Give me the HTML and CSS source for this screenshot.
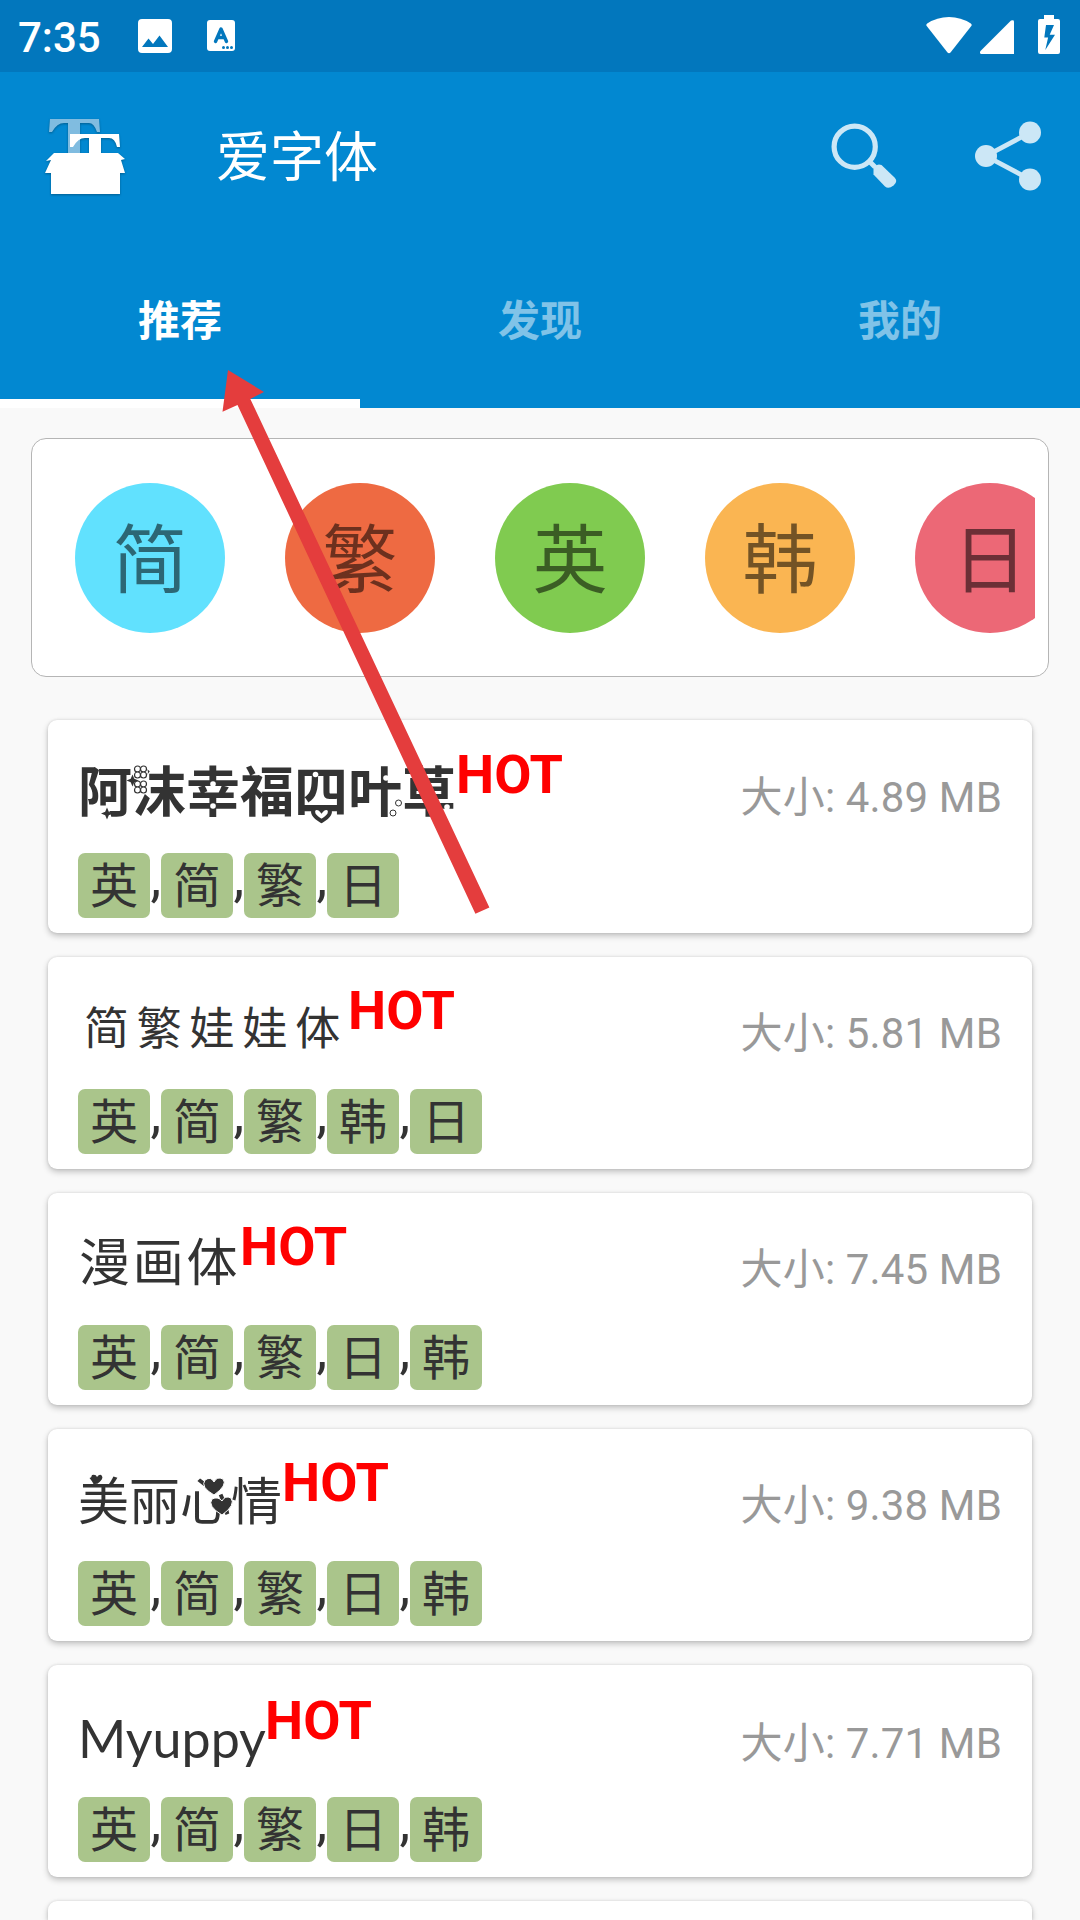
FILE: index.html
```html
<!DOCTYPE html>
<html lang="zh-CN">
<head>
    <title>爱字体</title>
    <meta charset="utf-8">
    <link rel="stylesheet" href="styles.css">
</head>
<body>

<div class="status-bar">
    <span class="time">7:35</span>
    <svg class="icon-picture" width="34" height="34" viewBox="0 0 34 34">
        <path fill="#fff" fill-rule="evenodd" d="M4 0h26a4 4 0 0 1 4 4v26a4 4 0 0 1-4 4H4a4 4 0 0 1-4-4V4a4 4 0 0 1 4-4zM4 28h26l-8.500-11.500-6.500 8.500-4.500-5.500z"/>
    </svg>
    <svg class="icon-input" width="28" height="31" viewBox="0 0 28 31">
        <rect width="28" height="31" rx="3" fill="#fff"/>
        <path d="M8.500 21.500L14 9l5.500 12.500M10.500 17.500h7" fill="none" stroke="#0277bd" stroke-width="3.400" stroke-linecap="round" stroke-linejoin="round"/>
        <g fill="#0277bd"><circle cx="16.500" cy="27.500" r="1.500"/><circle cx="20.500" cy="27.500" r="1.500"/><circle cx="24.500" cy="27.500" r="1.500"/></g>
    </svg>
    <div class="system-icons">
        <svg class="icon-wifi" width="46" height="37" viewBox="0 0 46 37">
            <path fill="#fff" d="M.7 9Q-.3 7.500 1.200 6.500 11 0 23 0t21.800 6.500q1.500 1 .5 2.500L24.500 35.500q-1.500 1.500-3 0z"/>
        </svg>
        <svg class="icon-signal" width="34" height="34" viewBox="0 0 34 34">
            <path fill="#fff" d="M34 1.500V34H1.500Q0 34 0 32.500v-1L31 .5Q34-.5 34 1.500z"/>
        </svg>
        <svg class="icon-battery" width="22" height="39" viewBox="0 0 22 39">
            <path fill="#fff" fill-rule="evenodd" d="M6 0h10v4h4q2 0 2 2v31q0 2-2 2H2q-2 0-2-2V6q0-2 2-2h4zM8 10L6.300 22.500h3.800L7.300 35 17 19.700h-5.300L16 10z"/>
        </svg>
    </div>
</div>

<div class="header">
    <div class="toolbar">
        <svg class="logo" width="84" height="80" viewBox="0 0 84 80">
            <path fill="#80bce0" d="M6 2h49l1 13h-3q-3-9-8-9h-9v30H24V6h-4Q13 6 8 15H5z"/>
            <path fill="#fff" d="M26 17h49l1 13h-3q-2-9-8-9h-8v15H45V21h-4q-7 0-12 9h-3z"/>
            <path fill="#fff" d="M10 36h64l7 6-4 1 4 13h-5v21H7V56H1l6-13-5 1z"/>
        </svg>
        <span class="app-name">爱字体</span>
        <svg class="icon-search" width="68" height="68" viewBox="0 0 68 68">
            <circle cx="24.700" cy="24.700" r="20.600" fill="none" stroke="#cce7f6" stroke-width="5.200"/>
            <path d="M39 39l6 6" stroke="#cce7f6" stroke-width="5"/>
            <path fill="#cce7f6" d="M43.500 45.500q3-4 8-2.500L64.500 55.500q4 4-1 8t-8.500 1L43.500 52.500z"/>
        </svg>
        <svg class="icon-share" width="68" height="70" viewBox="0 0 68 70">
            <path d="M57 11.500L13 35l44 23.500" fill="none" stroke="#cce7f6" stroke-width="4.800"/>
            <g fill="#cce7f6"><circle cx="13" cy="35" r="11"/><circle cx="57" cy="11.500" r="11"/><circle cx="57" cy="58.500" r="11"/></g>
        </svg>
    </div>
    <div class="tabs">
        <div class="tab active">推荐</div>
        <div class="tab">发现</div>
        <div class="tab">我的</div>
    </div>
</div>

<div class="languages">
    <div class="languages-scroll">
        <div class="lang lang-jian">简</div>
        <div class="lang lang-fan">繁</div>
        <div class="lang lang-ying">英</div>
        <div class="lang lang-han">韩</div>
        <div class="lang lang-ri">日</div>
    </div>
</div>

<div class="font-list">
    <div class="card first-card">
        <div class="card-top">
            <div class="title"><span class="name font-clover">阿沫幸福四叶草<svg class="decor" width="378" height="60" viewBox="0 0 378 60">
                <g id="clover" stroke="#333" stroke-width="1.200">
                    <circle cx="62.500" cy="5" r="7.500" fill="#fff" stroke="none"/>
                    <g fill="#fff"><circle cx="59.500" cy="2" r="3"/><circle cx="65.500" cy="2" r="3"/><circle cx="59.500" cy="8" r="3"/><circle cx="65.500" cy="8" r="3"/></g>
                </g>
                <use href="#clover" y="15"/>
                <g fill="#fff" stroke="#333" stroke-width="1"><circle cx="320.500" cy="36" r="3"/><circle cx="315" cy="46" r="3"/></g>
                <path fill="#333" d="M54.500 7.500l1.800 4.200 4.200 1.800-4.200 1.800-1.800 4.200-1.800-4.200-4.200-1.800 4.200-1.800zM29 40.500l1.800 4.200 4.200 1.800-4.200 1.800-1.800 4.200-1.800-4.200-4.200-1.800 4.200-1.800z"/>
                <path fill="#fff" stroke="#333" stroke-width="4" d="M243.500 54q-12-7-7-12.500 4-2 7 2 3-4 7-2 5 5.500-7 12.500z"/>
                <g fill="#fff"><circle cx="135" cy="17" r="2.800"/><circle cx="135" cy="39" r="2.800"/><circle cx="237.500" cy="7.500" r="2.800"/><circle cx="308" cy="11" r="2.800"/><circle cx="278.500" cy="43" r="2.800"/><circle cx="369" cy="40" r="2.800"/></g>
            </svg></span><span class="hot">HOT</span></div>
            <div class="size">大小: 4.89 MB</div>
        </div>
        <div class="tags"><span>英</span>,<span>简</span>,<span>繁</span>,<span>日</span></div>
    </div>
    <div class="card">
        <div class="card-top">
            <div class="title"><span class="name font-wawa">简繁娃娃体</span><span class="hot">HOT</span></div>
            <div class="size">大小: 5.81 MB</div>
        </div>
        <div class="tags"><span>英</span>,<span>简</span>,<span>繁</span>,<span>韩</span>,<span>日</span></div>
    </div>
    <div class="card">
        <div class="card-top">
            <div class="title"><span class="name font-manhua">漫画体</span><span class="hot">HOT</span></div>
            <div class="size">大小: 7.45 MB</div>
        </div>
        <div class="tags"><span>英</span>,<span>简</span>,<span>繁</span>,<span>日</span>,<span>韩</span></div>
    </div>
    <div class="card">
        <div class="card-top">
            <div class="title"><span class="name font-heart">美丽心情<svg class="decor" width="204" height="60" viewBox="0 0 204 60">
                <g fill="#333" stroke="#fff" stroke-width="1">
                    <path d="M136 19q-14-8-9-15 6-4 9 2 3-6 9-3 5 6-9 16z"/>
                    <path d="M144 39q-15-9-10-16 6-3 10 2 3-6 9-3 5 7-9 17z"/>
                </g>
                <path fill="#333" d="M19 8q-8-5-5-9 4-1 5 2 3-4 5-1 2 3-5 8z"/>
            </svg></span><span class="hot">HOT</span></div>
            <div class="size">大小: 9.38 MB</div>
        </div>
        <div class="tags"><span>英</span>,<span>简</span>,<span>繁</span>,<span>日</span>,<span>韩</span></div>
    </div>
    <div class="card">
        <div class="card-top">
            <div class="title"><span class="name font-myuppy">Myuppy</span><span class="hot">HOT</span></div>
            <div class="size">大小: 7.71 MB</div>
        </div>
        <div class="tags"><span>英</span>,<span>简</span>,<span>繁</span>,<span>日</span>,<span>韩</span></div>
    </div>
    <div class="card last-card"></div>
</div>

<svg class="arrow" width="1080" height="1920" viewBox="0 0 1080 1920">
    <path fill="#e43d3d" d="M228 370l36 22-13.700 7L489.400 907.500l-14 6.200L237.500 405l-15 6.700z"/>
</svg>

</body>
</html>
```
FILE: styles.css
```css
body,html {
    margin: 0; padding: 0;
}
body {
    position: relative;
    width: 1080px;
    height: 1920px;
    overflow: hidden;
    background: #f9f9f9;
    color: #333;
    font-family: Roboto, 'Noto Sans CJK SC', sans-serif;
}
svg {
    display: block;
    flex: none;
}

/* status bar */
.status-bar {
    display: flex;
    box-sizing: border-box;
    height: 72px;
    padding: 0 20px 0 18px;
    background: #0277bd;
    color: #fff;
}
.time {
    width: 120px;
    font-size: 42px;
    font-weight: 500;
    line-height: 76px;
}
.icon-picture {
    margin-top: 19px;
}
.icon-input {
    margin: 20px 0 0 35px;
}
.system-icons {
    display: flex;
    margin-left: auto;
}
.icon-wifi {
    margin-top: 17px;
}
.icon-signal {
    margin: 20px 24px 0 8px;
}
.icon-battery {
    margin-top: 15px;
}

/* header */
.header {
    height: 336px;
    background: #0288d1;
    color: #fff;
}
.toolbar {
    display: flex;
    align-items: center;
    box-sizing: border-box;
    height: 168px;
    padding: 0 39px 0 44px;
}
.logo {
    margin-top: 2px;
    filter: drop-shadow(0 1px 1px rgba(0, 0, 0, 0.3));
}
.app-name {
    margin-left: 88px;
    padding-top: 5px;
    font-size: 54px;
    line-height: 80px;
}
.icon-search {
    margin-left: auto;
}
.icon-share {
    margin-left: 75px;
}
.tabs {
    display: flex;
    height: 168px;
}
.tab {
    flex: 1;
    box-sizing: border-box;
    color: rgba(255, 255, 255, 0.5);
    font-size: 42px;
    font-weight: 700;
    line-height: 163px;
    text-align: center;
}
.tab.active {
    border-bottom: 9px solid #fff;
    color: #fff;
}

/* language picker */
.languages {
    box-sizing: border-box;
    width: 1018px;
    height: 239px;
    margin: 30px 0 0 31px;
    padding: 44px 13px 0 13px;
    border: 1px solid #b5b5b5;
    border-radius: 15px;
    background: #fff;
}
.languages-scroll {
    display: flex;
    gap: 60px;
    padding-left: 30px;
    overflow: hidden;
}
.lang {
    flex: none;
    width: 150px;
    height: 150px;
    border-radius: 50%;
    color: rgba(0, 0, 0, 0.54);
    font-size: 75px;
    line-height: 156px;
    text-align: center;
}
.lang-jian { background: #61e1fe; }
.lang-fan { background: #ee6a42; }
.lang-ying { background: #80cb50; }
.lang-han { background: #fab552; }
.lang-ri { background: #ec6876; }

/* font cards */
.font-list {
    display: flex;
    flex-direction: column;
    gap: 24px;
    box-sizing: border-box;
    height: 1243px;
    padding: 43px 48px 0;
    overflow: hidden;
}
.card {
    flex: none;
    box-sizing: border-box;
    height: 212px;
    padding: 0 30px;
    border-radius: 9px;
    background: #fff;
    box-shadow: 0 3px 6px rgba(0, 0, 0, 0.22), 0 0 3px rgba(0, 0, 0, 0.12);
}
.first-card {
    height: 213px;
    padding-top: 1px;
}
.last-card {
    height: 19px;
    border-radius: 9px 9px 0 0;
}
.card-top {
    display: flex;
    align-items: baseline;
    justify-content: space-between;
    box-sizing: border-box;
    height: 132px;
    padding-top: 43px;
}
.title {
    font-size: 54px;
    line-height: 60px;
    white-space: nowrap;
}
.name {
    position: relative;
    display: inline-block;
}
.decor {
    position: absolute;
    top: 3px;
    left: 0;
    overflow: visible;
}
.font-clover {
    font-weight: 700;
}
.font-wawa {
    padding-left: 6px;
    font-size: 45px;
    letter-spacing: 7.8px;
    line-height: 50px;
    vertical-align: 3px;
}
.font-manhua {
    padding-left: 1px;
    font-size: 51px;
    letter-spacing: 2.7px;
    line-height: 50px;
    vertical-align: 3px;
}
.font-heart {
    font-size: 51px;
}
.font-myuppy {
    width: 187px;
    font-family: Lato, sans-serif;
    font-size: 52px;
}
.hot {
    color: #f00;
    font-weight: 700;
    line-height: 0;
    vertical-align: 19px;
}
.size {
    color: #999;
    font-size: 42px;
    letter-spacing: 0.15px;
    line-height: 60px;
}
.tags {
    display: flex;
    font-size: 54px;
    line-height: 50px;
}
.tags span {
    width: 72px;
    height: 65px;
    margin-right: 0.4px;
    border-radius: 7px;
    background: #aac58b;
    font-size: 48px;
    line-height: 67px;
    text-align: center;
}

/* pointer laid over the page */
.arrow {
    position: absolute;
    top: 0;
    left: 0;
}
```
